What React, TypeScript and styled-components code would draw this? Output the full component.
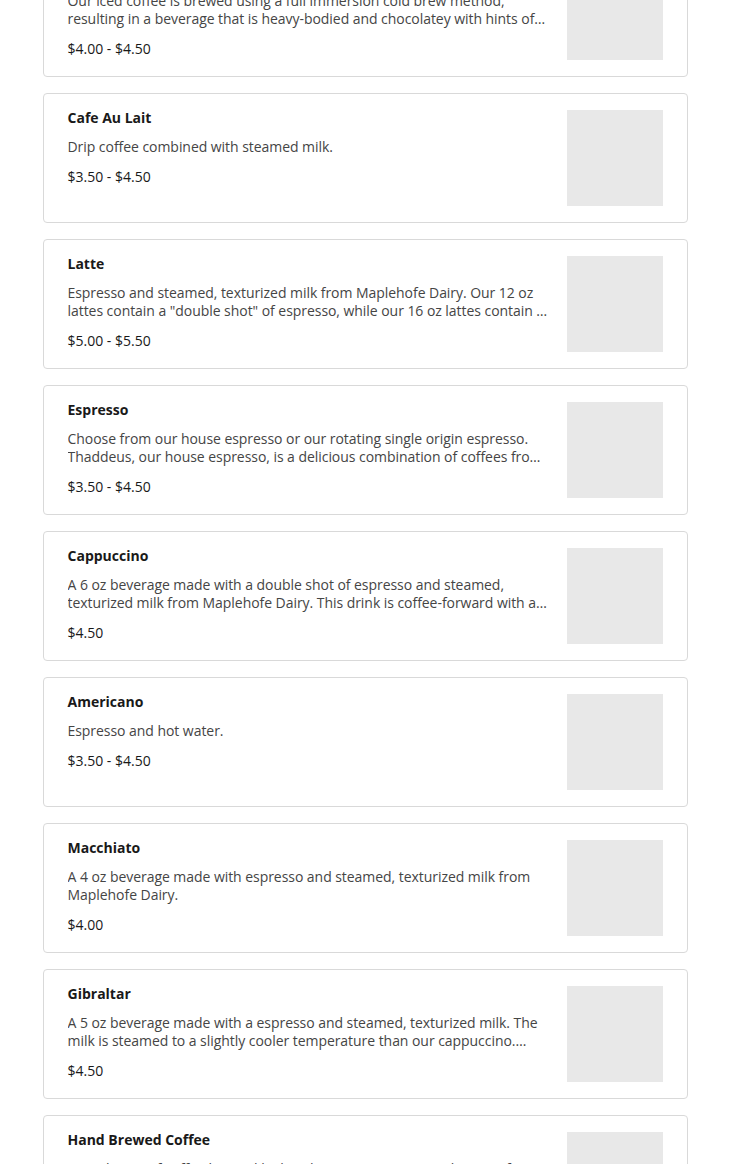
import styled, { createGlobalStyle } from 'styled-components';

const GlobalStyle = createGlobalStyle`
    html, body {
        margin: 0;
        padding: 0;
        background: #ffffff;
        font-family: 'Open Sans', 'Liberation Sans', Arial, sans-serif;
        color: #191919;
    }
`;

type MenuItem = {
    name: string;
    description: string;
    price: string;
};

const items: MenuItem[] = [
    {
        name: 'Cold Brew',
        description:
            'Our iced coffee is brewed using a full immersion cold brew method, resulting in a beverage that is heavy-bodied and chocolatey with hints of dried fruit and a smooth finish.',
        price: '$4.00 - $4.50',
    },
    {
        name: 'Cafe Au Lait',
        description: 'Drip coffee combined with steamed milk.',
        price: '$3.50 - $4.50',
    },
    {
        name: 'Latte',
        description:
            'Espresso and steamed, texturized milk from Maplehofe Dairy. Our 12 oz lattes contain a "double shot" of espresso, while our 16 oz lattes contain a "triple shot".',
        price: '$5.00 - $5.50',
    },
    {
        name: 'Espresso',
        description:
            'Choose from our house espresso or our rotating single origin espresso. Thaddeus, our house espresso, is a delicious combination of coffees from Central and South America.',
        price: '$3.50 - $4.50',
    },
    {
        name: 'Cappuccino',
        description:
            'A 6 oz beverage made with a double shot of espresso and steamed, texturized milk from Maplehofe Dairy. This drink is coffee-forward with a velvety texture.',
        price: '$4.50',
    },
    {
        name: 'Americano',
        description: 'Espresso and hot water.',
        price: '$3.50 - $4.50',
    },
    {
        name: 'Macchiato',
        description: 'A 4 oz beverage made with espresso and steamed, texturized milk from Maplehofe Dairy.',
        price: '$4.00',
    },
    {
        name: 'Gibraltar',
        description:
            'A 5 oz beverage made with a espresso and steamed, texturized milk. The milk is steamed to a slightly cooler temperature than our cappuccino. (Hint: it is served in a Gibraltar glass.)',
        price: '$4.50',
    },
    {
        name: 'Hand Brewed Coffee',
        description: 'A single cup of coffee brewed by hand using our rotating selection of beans.',
        price: '$3.50 - $4.50',
    },
];

const MenuList = styled.div`
    display: flex;
    flex-direction: column;
    gap: 16px;
    width: 645px;
    margin: -53px auto 0;
`;

const Card = styled.div`
    display: flex;
    gap: 15px;
    height: 130px;
    box-sizing: border-box;
    padding: 16px 24px 16px 24px;
    border: 1px solid #d9d9d9;
    border-radius: 4px;
    background: #ffffff;
`;

const Info = styled.div`
    flex: 1;
    min-width: 0;
    display: flex;
    flex-direction: column;
`;

const Name = styled.div`
    font-size: 14px;
    font-weight: 700;
    line-height: 18px;
    color: #191919;
    margin-top: -1px;
`;

const Description = styled.div`
    margin-top: 11px;
    font-size: 14px;
    line-height: 18px;
    letter-spacing: -0.05px;
    color: #454545;
    display: -webkit-box;
    -webkit-line-clamp: 2;
    -webkit-box-orient: vertical;
    overflow: hidden;
`;

const Price = styled.div`
    margin-top: 11px;
    font-size: 14px;
    line-height: 20px;
    color: #191919;
`;

const Thumb = styled.div`
    flex: none;
    width: 96px;
    height: 96px;
    background: #e8e8e8;
`;

export default function App() {
    return (
        <>
            <GlobalStyle />
            <MenuList>
                {items.map((item) => (
                    <Card key={item.name}>
                        <Info>
                            <Name>{item.name}</Name>
                            <Description>{item.description}</Description>
                            <Price>{item.price}</Price>
                        </Info>
                        <Thumb />
                    </Card>
                ))}
            </MenuList>
        </>
    );
}
